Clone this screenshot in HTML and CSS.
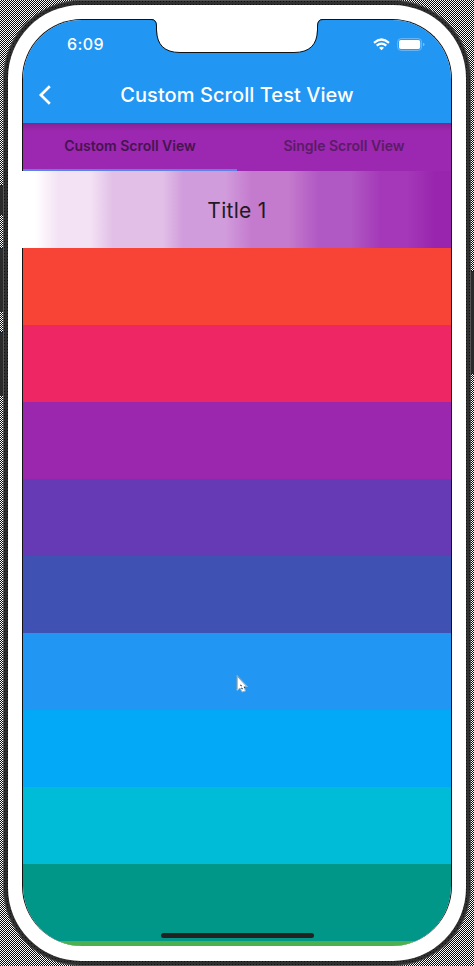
FILE: index.html
```html
<!DOCTYPE html>
<html lang="en">
<head>
<meta charset="utf-8">
<title>Custom Scroll Test View</title>
<link rel="stylesheet" href="styles.css">
</head>
<body>
<div class="side-button silent"></div>
<div class="side-button volume-up"></div>
<div class="side-button volume-down"></div>
<div class="side-button power"></div>
<div class="phone">
  <div class="bezel">
    <main class="screen">
      <header class="top">
        <div class="status">
          <span class="time">6:09</span>
          <span class="indicators">
            <svg class="wifi" width="17" height="13" viewBox="0 0 17 13" fill="none" stroke="#fff" stroke-width="2.2"><path d="M1 4.8Q8.500-1.800 16 4.800"/><path d="M3.700 7.700Q8.500 3.500 13.300 7.700"/><path d="M6 9.800Q8.500 7.800 11 9.800L8.500 12.300Z" fill="#fff" stroke="none"/></svg>
            <svg class="battery" width="28" height="13" viewBox="0 0 28 13"><rect x=".6" y=".6" width="24" height="11.800" rx="3.500" fill="none" stroke="#6fb8f6"/><rect x="2" y="2" width="21.200" height="9" rx="2" fill="#fff"/><path d="M26 4.700v3.600q1.500-.5 1.500-1.800T26 4.700" fill="#7ebff6"/></svg>
          </span>
        </div>
        <div class="appbar">
          <svg class="back" width="14" height="22" viewBox="0 0 14 22" fill="none" stroke="#fff" stroke-width="2.700"><path d="M11.800 2.300 2.900 11l8.900 8.700"/></svg>
          <h1>Custom Scroll Test View</h1>
        </div>
      </header>
      <nav class="tabs">
        <span class="tab active">Custom Scroll View</span>
        <span class="tab">Single Scroll View</span>
      </nav>
      <div class="title-row"><span>Title 1</span></div>
      <div class="row red"></div>
      <div class="row pink"></div>
      <div class="row purple"></div>
      <div class="row deep-purple"></div>
      <div class="row indigo"></div>
      <div class="row blue"></div>
      <div class="row light-blue"></div>
      <div class="row cyan"></div>
      <div class="row teal"></div>
      <div class="row green"></div>
    </main>
    <svg class="notch" width="172" height="36" viewBox="0 0 172 36"><path d="M0 0H172V1Q166 1 166 8V12Q166 34.500 143 34.500H29Q6 34.500 6 12V8Q6 1 0 1Z" fill="#fff"/><path d="M0 1.500Q5.500 1.500 5.500 8V12Q6 34.500 29 34.500H143Q166 34.500 166.500 12V8Q166.500 1.500 172 1.500" fill="none" stroke="#111"/></svg>
    <div class="home-bar"></div>
  </div>
</div>
<svg class="cursor" width="14" height="20" viewBox="0 0 14 20"><path d="M2 1.500V16.500L5 14 7 18 10.500 17 9 12.500H12.500Z" fill="#fff" stroke="#8fb4cd" stroke-width="1"/><path d="M2 2V15M3 3 11 12" stroke="#5d7f97" stroke-width=".6"/><path d="M5 11 7 12M6 14 8 15M9 13 10 14" stroke="#354655"/></svg>
</body>
</html>
```
FILE: styles.css
```css
* { box-sizing: border-box; }

body {
  position: relative;
  width: 474px;
  height: 966px;
  margin: 0;
  padding-left: 3px;
  overflow: hidden;
  font-family: Inter, "Liberation Sans", sans-serif;
  background: repeating-conic-gradient(#080808 0 25%, #fff 0 50%) 0 0 / 2px 2px;
}

.side-button {
  position: absolute;
  left: 0;
  width: 3px;
  background: #2b2b2b;
  border-top: 1px solid #14202f;
}
.silent { top: 185px; height: 30px; }
.volume-up { top: 248px; height: 64px; }
.volume-down { top: 332px; height: 64px; }
.power { top: 271px; left: 471px; height: 103px; }

.phone {
  width: 468px;
  height: 966px;
  padding: 5px;
  border-radius: 78px;
  background: radial-gradient(circle, #111 0 .6px, transparent .7px) 0 0 / 3px 3px, #303030;
  box-shadow: inset 0 0 0 1px #555;
}

.bezel {
  position: relative;
  height: 956px;
  padding: 14px 14px 15px;
  border-radius: 73px;
  background: #fff;
}

/* The white start of the gradient runs over the screen outline. */
.bezel::after {
  content: "";
  position: absolute;
  left: 14px;
  top: 166px;
  width: 1px;
  height: 77px;
  background: #fff;
}

.screen {
  height: 927px;
  border-radius: 60px;
  overflow: hidden;
  border: 1px solid #111;
  border-bottom: 0;
}

.top {
  height: 103px;
  background: #2196f3;
  color: #fff;
}

.status {
  display: flex;
  justify-content: space-between;
  height: 48px;
  padding: 15px 26px 0 44px;
}
.time {
  font-size: 16px;
  line-height: 19px;
  font-weight: 500;
  letter-spacing: .4px;
}
.indicators { display: flex; gap: 7px; padding-top: 3px; }

.appbar {
  position: relative;
  display: flex;
  align-items: center;
  justify-content: center;
  height: 55px;
}
.back { position: absolute; left: 15px; top: 16px; }
h1 {
  margin: -2px 0 0;
  font-size: 20px;
  line-height: 28px;
  font-weight: 500;
  letter-spacing: .07px;
}

.tabs {
  display: flex;
  height: 48px;
  background: linear-gradient(#7e258f, #9323a3 4px, #9c27b0 8px);
}
.tab {
  flex: 1;
  text-align: center;
  font-size: 14px;
  line-height: 46px;
  font-weight: 600;
  color: #5b1b67;
}
.active { border-bottom: 2px solid #5d83e4; color: #461450; }

.title-row {
  display: flex;
  align-items: center;
  justify-content: center;
  height: 77px;
  padding-top: 1px;
  font-size: 21px;
  letter-spacing: .3px;
  color: #211a24;
  background: linear-gradient(90deg, #fff 0 12px, #f3e1f4 36px 68px, #e1bfe7 90px 140px, #d19cdc 160px 202px, #c47acd 229px 266px, #b058c3 296px 328px, #a438b8 358px 384px, #9925ae 412px);
}

.row { height: 77px; }
.red { background: #f74437; }
.pink { background: #ef2664; }
.purple { background: #9b27ae; }
.deep-purple { background: #663ab5; }
.indigo { background: #3f51b3; }
.blue { background: #2196f3; }
.light-blue { background: #03a8f7; }
.cyan { background: #00bcd7; }
.teal { background: #009688; }
.green { height: 5px; background: #4caf50; }

.notch { position: absolute; left: 143px; top: 13px; }
.home-bar {
  position: absolute;
  left: 153px;
  top: 928px;
  width: 153px;
  height: 5px;
  border-radius: 3px;
  background: #222;
}
.cursor { position: absolute; left: 235px; top: 674px; }
```
